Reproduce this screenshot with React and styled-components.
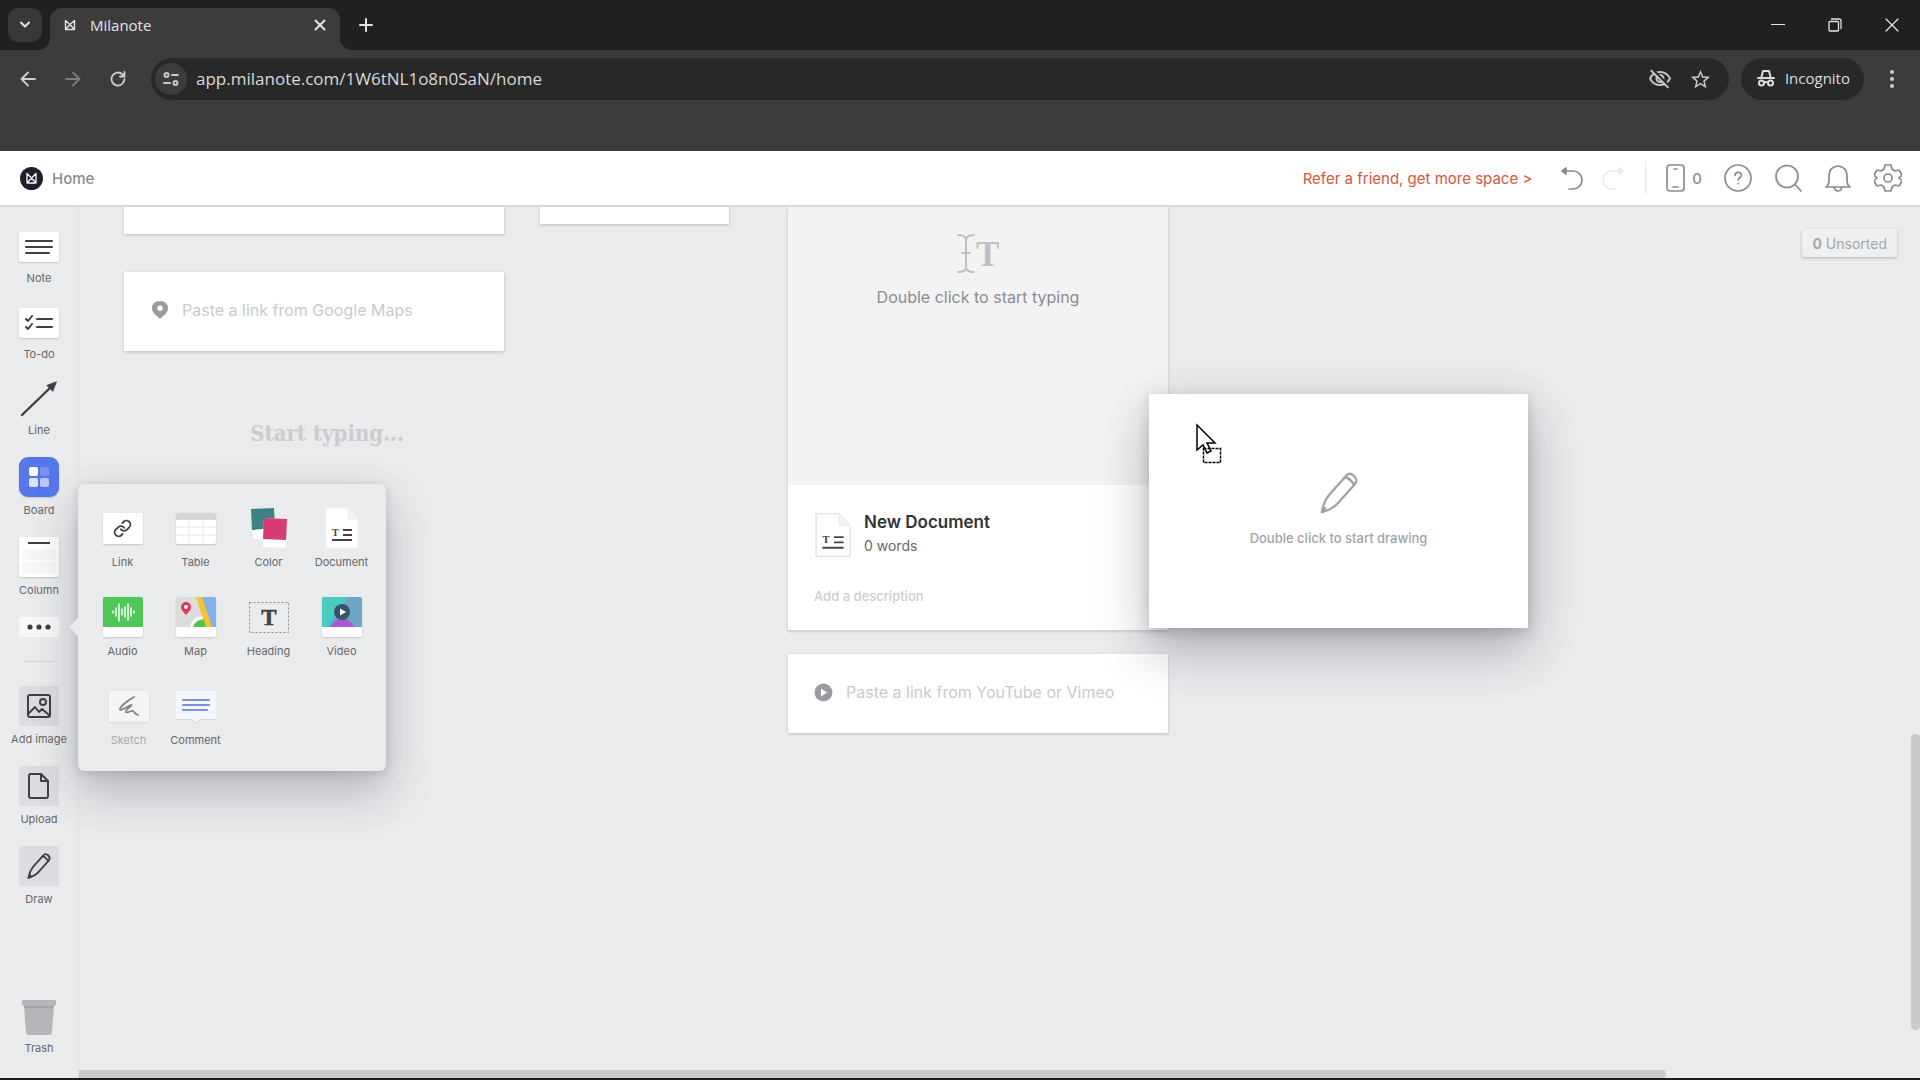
import React from 'react';
import styled, { createGlobalStyle } from 'styled-components';
import { Link2Icon, LinkIcon as ChainIcon } from 'lucide-react';
import { MdOutlineVisibilityOff, MdStarBorder } from 'react-icons/md';

const GlobalStyle = createGlobalStyle`
  * {
    box-sizing: border-box;
  }
  body {
    margin: 0;
    background: #1c1c1c;
    font-family: Inter, sans-serif;
  }
  button {
    border: 0;
    padding: 0;
    background: none;
    font: inherit;
    color: inherit;
    cursor: pointer;
  }
  input {
    border: 0;
    padding: 0;
    background: none;
    outline: 0;
    font: inherit;
    min-width: 0;
  }
  svg {
    display: block;
    flex: none;
  }
`;

const Page = styled.div`
  display: flex;
  flex-direction: column;
  min-height: 100vh;
  padding-bottom: 2px;
`;

/* browser chrome */

const TabStrip = styled.div`
  display: flex;
  align-items: flex-end;
  height: 50px;
  padding-left: 8px;
  background: #202020;
  color: #e3e3e3;
`;

const TabSearch = styled.button`
  display: grid;
  place-items: center;
  width: 34px;
  height: 34px;
  margin: 0 8px 8px 0;
  border-radius: 10px;
  background: #383838;
`;

const Tab = styled.div`
  position: relative;
  display: flex;
  align-items: center;
  width: 290px;
  height: 42px;
  padding: 0 14px 8px;
  border-radius: 12px 12px 0 0;
  background: #3c3c3c;
  font: 15px/20px 'Open Sans', sans-serif;

  &::before,
  &::after {
    content: '';
    position: absolute;
    bottom: 0;
    width: 12px;
    height: 12px;
  }
  &::before {
    right: 100%;
    background: radial-gradient(circle at 0 0, #202020 12px, #3c3c3c 12px);
  }
  &::after {
    left: 100%;
    background: radial-gradient(circle at 100% 0, #202020 12px, #3c3c3c 12px);
  }
`;

const TabTitle = styled.span`
  flex: 1;
  margin-left: 14px;
`;

const NewTab = styled.button`
  margin: 0 auto 18px 19px;
`;

const WindowButton = styled.button`
  display: grid;
  place-items: center;
  width: 57px;
  height: 50px;
`;

const Toolbar = styled.div`
  display: flex;
  align-items: flex-start;
  height: 101px;
  padding: 8px 16px 0 0;
  background: #3c3c3c;
  color: #dcdcdc;
`;

const NavButton = styled.button`
  display: grid;
  place-items: center;
  width: 45px;
  height: 42px;
  color: ${(p) => (p.$dim ? '#7d7d7d' : '#d0d0d0')};
`;

const NavGroup = styled.div`
  display: flex;
  margin: 0 11px 0 5px;
`;

const Omnibox = styled.div`
  display: flex;
  align-items: center;
  flex: 1;
  height: 42px;
  padding: 0 17px 0 4px;
  border-radius: 21px;
  background: #282828;
  color: #c8c8c8;
  gap: 17px;
`;

const SiteInfo = styled.button`
  display: grid;
  place-items: center;
  width: 32px;
  height: 32px;
  border-radius: 16px;
  background: #3c3c3c;
  margin-right: -8px;
`;

const Address = styled.input`
  flex: 1;
  color: #d9d9d9;
  font: 17px/24px 'Open Sans', sans-serif;
`;

const Incognito = styled.button`
  display: flex;
  align-items: center;
  gap: 10px;
  height: 42px;
  margin: 0 16px 0 12px;
  padding: 0 14px 2px 16px;
  border-radius: 21px;
  background: #282828;
  font: 15px/20px 'Open Sans', sans-serif;
`;

const MenuButton = styled(NavButton)`
  width: 24px;
`;

/* app */

const Header = styled.header`
  display: flex;
  align-items: center;
  height: 56px;
  padding: 0 18px 0 20px;
  background: #fff;
  border-bottom: 2px solid #d8d9db;
  color: #8a8b8f;
`;

const HomeLink = styled.a`
  display: flex;
  align-items: center;
  gap: 9px;
  margin-right: auto;
  color: #8a8b8f;
  font-size: 15px;
  font-weight: 500;
  text-decoration: none;
`;

const Refer = styled.a`
  margin-right: 28px;
  color: #d2583c;
  font-size: 15px;
  text-decoration: none;
`;

const HeaderGroup = styled.div`
  display: flex;
  align-items: center;
  gap: ${(p) => p.$gap}px;
`;

const HeaderButton = styled.button`
  display: flex;
  align-items: center;
  gap: 6px;
  font-size: 15px;
  font-weight: 500;
`;

const Divider = styled.span`
  width: 1px;
  height: 32px;
  margin: 0 20px;
  background: #e8e8e9;
`;

const Workspace = styled.div`
  position: relative;
  display: flex;
  flex: 1;
  background: #eaebed;
`;

const Sidebar = styled.nav`
  display: flex;
  flex-direction: column;
  align-items: center;
  gap: 20px;
  width: 79px;
  padding: 22px 0 23px;
  border-right: 1px solid #dfe0e2;
`;

const Tool = styled.button`
  display: flex;
  flex-direction: column;
  align-items: center;
  gap: 6px;
  width: 73px;
  padding-left: ${(p) => (p.$faded ? 12 : 0)}px;
  color: #66676b;
  font-size: 11px;
  line-height: 14px;
  opacity: ${(p) => (p.$faded ? 0.5 : 1)};
`;

const IconSlot = styled.span`
  display: grid;
  place-items: center;
  height: ${(p) => p.$h}px;
`;

const Tile = styled.span`
  display: grid;
  place-items: center;
  width: 40px;
  height: ${(p) => p.$h}px;
  border-radius: ${(p) => p.$r || 2}px;
  background: ${(p) => p.$bg || '#fff'};
  box-shadow: ${(p) => (p.$flat ? 'none' : '0 1px 2px rgba(0, 0, 0, 0.16)')};
  overflow: hidden;
`;

const SideRule = styled.hr`
  width: 32px;
  height: 1px;
  margin: 4px 0;
  border: 0;
  background: #d2d3d6;
`;

const Trash = styled(Tool)`
  margin-top: auto;
`;

const Flyout = styled.div`
  position: absolute;
  top: 277px;
  left: 78px;
  z-index: 2;
  display: grid;
  grid-template-columns: repeat(4, 73px);
  gap: 27px 0;
  padding: 23px 8px 24px;
  border-radius: 6px;
  background: #eaebed;
  box-shadow: 0 20px 48px rgba(20, 20, 30, 0.26), 0 2px 10px rgba(20, 20, 30, 0.14);

  &::before {
    content: '';
    position: absolute;
    top: 134px;
    left: -9px;
    border: 9px solid transparent;
    border-left: 0;
    border-right-color: #eaebed;
  }
`;

const Canvas = styled.main`
  position: relative;
  flex: 1;
  overflow: hidden;
`;

const Card = styled.div`
  position: absolute;
  left: ${(p) => p.$x}px;
  top: ${(p) => p.$y}px;
  width: ${(p) => p.$w}px;
  height: ${(p) => p.$h}px;
  background: #fff;
  box-shadow: 0 1px 3px rgba(0, 0, 0, 0.2);
`;

const LinkCard = styled(Card)`
  display: flex;
  align-items: center;
  gap: ${(p) => p.$gap}px;
  padding: 0 26px 3px;
  color: #9b9c9f;
`;

const LinkInput = styled.input`
  flex: 1;
  font-size: 16px;
  line-height: 20px;
  &::placeholder {
    color: #c9cacc;
    opacity: 1;
  }
`;

const HeadingInput = styled.input`
  position: absolute;
  left: 58px;
  top: 210px;
  width: 380px;
  text-align: center;
  font: bold 22px/32px 'DejaVu Serif Condensed', 'DejaVu Serif', serif;
  &::placeholder {
    color: #cbccce;
    opacity: 1;
  }
`;

const DocPreview = styled.div`
  display: flex;
  flex-direction: column;
  align-items: center;
  gap: 14px;
  height: 278px;
  padding-top: 26px;
  background: #f3f3f4;
  color: #8b8c90;
  font-size: 16px;
  line-height: 20px;
`;

const DocInfo = styled.div`
  display: flex;
  gap: 13px;
  padding: 26px 26px 0 27px;
`;

const DocName = styled.div`
  color: #323338;
  font-size: 17px;
  font-weight: 600;
  line-height: 22px;
`;

const DocWords = styled.div`
  margin-top: 2px;
  color: #66676b;
  font-size: 14px;
  line-height: 22px;
`;

const Description = styled.input`
  margin: 27px 26px 0;
  width: 300px;
  font-size: 13px;
  font-weight: 500;
  line-height: 20px;
  &::placeholder {
    color: #cdced0;
    opacity: 1;
  }
`;

const SketchCard = styled(Card)`
  display: flex;
  flex-direction: column;
  align-items: center;
  gap: 14px;
  padding-top: 78px;
  color: #a3a4a6;
  font-size: 13px;
  font-weight: 500;
  line-height: 20px;
  box-shadow: 0 20px 48px rgba(20, 20, 30, 0.3), 0 4px 12px rgba(20, 20, 30, 0.16);
`;

const Cursor = styled.div`
  position: absolute;
  left: 1117px;
  top: 216px;
`;

const Unsorted = styled.button`
  position: absolute;
  top: 22px;
  right: 23px;
  height: 28px;
  padding: 0 10px;
  border-radius: 3px;
  background: #eeeff0;
  box-shadow: 0 1px 3px rgba(0, 0, 0, 0.24);
  color: #a5a6a9;
  font-size: 14px;
`;

const ScrollV = styled.div`
  position: absolute;
  right: 0;
  top: 60.5%;
  width: 9px;
  height: 34%;
  border-radius: 5px;
  background: #c9cacc;
`;

const ScrollH = styled.div`
  position: absolute;
  left: 0;
  bottom: 0;
  width: 86.2%;
  height: 8px;
  border-radius: 0 4px 4px 0;
  background: #c9cacc;
`;

/* icons */

const Svg = ({ w, h, vw, vh, sw = 2, color = 'currentColor', children }) => (
  <svg
    width={w}
    height={h || w}
    viewBox={`0 0 ${vw || w} ${vh || vw || h || w}`}
    fill="none"
    stroke={color}
    strokeWidth={sw}
    strokeLinecap="round"
    strokeLinejoin="round"
    aria-hidden="true"
  >
    {children}
  </svg>
);

const Mark = ({ size }) => (
  <Svg w={size} vw={12} sw={1.4}>
    <path d="M1.500 1.500L6 5.500l4.500-4v9h-9ZM1.500 10.500L6 5.500l4.500 5" />
  </Svg>
);

const Logo = () => (
  <svg width="23" height="23" viewBox="0 0 23 23" aria-hidden="true">
    <circle cx="11.5" cy="11.5" r="11.5" fill="#1d1f2b" />
    <path
      d="M7 6.500l4.500 4.500L16 6.500V16H7ZM7 16l4.500-5 4.500 5"
      fill="none"
      stroke="#fff"
      strokeWidth="1.3"
      strokeLinejoin="round"
    />
  </svg>
);

const Pencil = ({ w, h, sw, color }) => (
  <Svg w={w} h={h} vw={38} vh={42} sw={sw} color={color}>
    <path d="M2 40C3 33 5 28 9 23L26 4C28 1 31 1 34 4C37 7 37 9 35 12L18 31C14 36 9 38 2 40Z" />
    <path d="M25 5C28 6 32 9 34 13M2 40l3-4" />
  </Svg>
);

const DocPage = ({ w, h, outline }) => (
  <svg width={w} height={h} viewBox="0 0 34 42" aria-hidden="true">
    <path
      d="M1 1h22l10 11v29H1Z"
      fill="#fff"
      stroke={outline ? '#e6e6e7' : '#f3f3f4'}
      strokeWidth="1.5"
    />
    <path d="M23 1v11h10" fill="#f3f3f4" stroke="#ececed" />
    <text x="7" y="29" fontFamily="Liberation Serif" fontWeight="bold" fontSize="10" fill="#444549">
      T
    </text>
    <path d="M18 23h9M18 28h9M7 33h20" stroke="#444549" strokeWidth="1.8" />
  </svg>
);

const NoteIcon = () => (
  <Tile $h={30}>
    <Svg w={28} h={16} color="#3f4045">
      <path d="M1 2h26M1 8h26M1 14h23" />
    </Svg>
  </Tile>
);

const TodoIcon = () => (
  <Tile $h={30}>
    <Svg w={28} h={16} color="#3f4045">
      <path d="M12 4h15M12 12h15M1 4l2 2 4-5M1 12l2 2 4-5" />
    </Svg>
  </Tile>
);

const LineIcon = () => (
  <Svg w={38} h={36} sw={2.4} color="#3f4045">
    <path d="M2 34L32 5" />
    <path d="M36 1L27 4.500l5.500 5.500Z" fill="#3f4045" strokeWidth="1" />
  </Svg>
);

const BoardIcon = () => (
  <Tile $h={40} $r={9} $bg="#5577ea">
    <svg width="20" height="20" aria-hidden="true">
      <rect width="9" height="9" rx="2" fill="#fff" />
      <rect x="11" width="9" height="9" rx="2" fill="#fff" opacity="0.22" />
      <rect y="11" width="9" height="9" rx="2" fill="#fff" opacity="0.8" />
      <rect x="11" y="11" width="9" height="9" rx="2" fill="#fff" opacity="0.6" />
    </svg>
  </Tile>
);

const ColumnIcon = () => (
  <Tile $h={40}>
    <svg width="40" height="40" aria-hidden="true">
      <path d="M9 6h22" stroke="#3f4045" strokeWidth="2" />
      <path d="M3 12h34v11H3zM3 25h34v11H3z" fill="#f7f7f8" />
    </svg>
  </Tile>
);

const DotsIcon = () => (
  <Tile $h={20} $r={4} $bg="#f8f8f9" $flat>
    <svg width="24" height="6" fill="#3f4045" aria-hidden="true">
      <circle cx="3" cy="3" r="2.6" />
      <circle cx="12" cy="3" r="2.6" />
      <circle cx="21" cy="3" r="2.6" />
    </svg>
  </Tile>
);

const ImageIcon = () => (
  <Tile $h={40} $bg="#dcdde0" $flat>
    <Svg w={24} color="#3f4045">
      <rect x="1" y="1" width="22" height="22" rx="2" />
      <circle cx="16" cy="8" r="3" />
      <path d="M2 19l6-6 4 5 3-3 7 6" />
    </Svg>
  </Tile>
);

const UploadIcon = () => (
  <Tile $h={40} $bg="#dcdde0" $flat>
    <Svg w={22} h={26} color="#3f4045">
      <path d="M3 1h10l7 7v15c0 1-1 2-2 2H3c-1 0-2-1-2-2V3c0-1 1-2 2-2Z" />
      <path d="M13 1v7h7" />
    </Svg>
  </Tile>
);

const DrawIcon = () => (
  <Tile $h={40} $bg="#dcdde0" $flat>
    <Pencil w={26} h={26} sw={3} color="#3f4045" />
  </Tile>
);

const TrashIcon = () => (
  <svg width="34" height="35" aria-hidden="true">
    <path d="M0 0h34v5l-2 1-2 26q0 3-3 3H7q-3 0-3-3L2 6 0 5Z" fill="#b5b6b9" />
    <path d="M2 6h30v2H2z" fill="#a6a7aa" />
  </svg>
);

const LinkIcon = () => (
  <Tile $h={31}>
    <ChainIcon size={19} strokeWidth={2.3} color="#3f4045" />
  </Tile>
);

const TableIcon = () => (
  <Tile $h={31}>
    <svg width="40" height="31" aria-hidden="true">
      <path d="M0 0h40v7H0z" fill="#d4d5d7" />
      <path d="M0 14h40M0 22h40M13 7v24M27 7v24" stroke="#e3e4e6" />
    </svg>
  </Tile>
);

const ColorIcon = () => (
  <svg width="38" height="42" aria-hidden="true">
    <path d="M1 2l23-1 1 29-22 2Z" fill="#fff" />
    <path d="M1 2l23-1 1 20-23 2Z" fill="#3d8186" />
    <path d="M14 11l23 1-2 29-22-1Z" fill="#fff" />
    <path d="M14 11l23 1-1 21-23-1Z" fill="#d73d74" />
  </svg>
);

const AudioIcon = () => (
  <Tile $h={40}>
    <svg width="40" height="40" aria-hidden="true">
      <path d="M0 0h40v30H0z" fill="#4fc656" />
      <path
        d="M10 14v2M13 11v8M16 7v17M19 12v6M22 10v10M25 7v16M28 11v8M31 14v2"
        stroke="#fff"
        strokeWidth="1.5"
        strokeLinecap="round"
      />
    </svg>
  </Tile>
);

const MapIcon = () => (
  <Tile $h={40}>
    <svg width="40" height="40" aria-hidden="true">
      <path d="M0 0h40v30H0z" fill="#dcdcdc" />
      <path d="M21 0h19v30h-6Z" fill="#82b1ec" />
      <path d="M14 30q2-10 12-11l4 11Z" fill="#fff" />
      <path d="M17 30q2-7 11-8l3 8Z" fill="#57c152" />
      <path d="M20 0h6l10 30h-6Z" fill="#f2c52c" />
      <path d="M10 18c-3-4-5-5-5-8a5 5 0 0 1 10 0c0 3-2 4-5 8Z" fill="#d93a5d" />
      <circle cx="10" cy="10" r="2" fill="#fff" />
    </svg>
  </Tile>
);

const HeadingIcon = () => (
  <svg width="40" height="31" aria-hidden="true">
    <rect x="0.5" y="0.5" width="39" height="30" fill="none" stroke="#87888b" strokeDasharray="2 2" />
    <text
      x="20"
      y="23"
      textAnchor="middle"
      fontFamily="Liberation Serif"
      fontWeight="bold"
      fontSize="23"
      fill="#3f4045"
      stroke="#3f4045"
      strokeWidth="0.500"
    >
      T
    </text>
  </svg>
);

const VideoIcon = () => (
  <Tile $h={40}>
    <svg width="40" height="40" aria-hidden="true">
      <path d="M0 0h40v30H0z" fill="#6fa5c4" />
      <path d="M0 0h26L6 30H0z" fill="#48cbc0" />
      <path d="M8 30q6-9 12-9t13 9Z" fill="#a35cd3" />
      <circle cx="20" cy="15" r="8" fill="#35546f" />
      <path d="M18 11.500l6 3.500-6 3.500z" fill="#fff" />
    </svg>
  </Tile>
);

const SketchIcon = () => (
  <Tile $h={31}>
    <Svg w={22} h={20} sw={1.8} color="#1f2024">
      <path d="M16 1C10 4 3 10 2 13s7-2 11-4c3-1-6 5-5 7s5-2 7-1 1 3 5 4" />
    </Svg>
  </Tile>
);

const CommentIcon = () => (
  <svg width="40" height="35" aria-hidden="true">
    <path d="M0 2h40v28H24l-4 4-4-4H0Z" fill="#f5f7fe" />
    <path d="M0 30.500h16l4 4 4-4h16" fill="none" stroke="#d5d7dd" />
    <path d="M7 11h26M7 16h26M7 21h24" stroke="#7c8fe0" strokeWidth="2" strokeLinecap="round" />
  </svg>
);

const sideTools = [
  { label: 'Note', h: 36, icon: <NoteIcon /> },
  { label: 'To-do', h: 36, icon: <TodoIcon /> },
  { label: 'Line', h: 36, icon: <LineIcon /> },
  { label: 'Board', h: 40, icon: <BoardIcon /> },
  { label: 'Column', h: 40, icon: <ColumnIcon /> },
];

const mediaTools = [
  { label: 'Add image', icon: <ImageIcon /> },
  { label: 'Upload', icon: <UploadIcon /> },
  { label: 'Draw', icon: <DrawIcon /> },
];

const moreTools = [
  { label: 'Link', icon: <LinkIcon /> },
  { label: 'Table', icon: <TableIcon /> },
  { label: 'Color', icon: <ColorIcon /> },
  { label: 'Document', icon: <DocPage w={34} h={42} /> },
  { label: 'Audio', icon: <AudioIcon /> },
  { label: 'Map', icon: <MapIcon /> },
  { label: 'Heading', icon: <HeadingIcon /> },
  { label: 'Video', icon: <VideoIcon /> },
  { label: 'Sketch', icon: <SketchIcon />, faded: true },
  { label: 'Comment', icon: <CommentIcon /> },
];

const BrowserChrome = () => (
  <>
    <TabStrip>
      <TabSearch aria-label="Search tabs">
        <Svg w={12} h={8}>
          <path d="M2 1.500l4 4 4-4" />
        </Svg>
      </TabSearch>
      <Tab>
        <Mark size={12} />
        <TabTitle>Milanote</TabTitle>
        <button aria-label="Close tab">
          <Svg w={12}>
            <path d="M1.500 1.500l9 9M10.500 1.500l-9 9" />
          </Svg>
        </button>
      </Tab>
      <NewTab aria-label="New tab">
        <Svg w={14}>
          <path d="M7 1v12M1 7h12" />
        </Svg>
      </NewTab>
      <WindowButton aria-label="Minimize">
        <Svg w={14} sw={1}>
          <path d="M0 6.500h14" />
        </Svg>
      </WindowButton>
      <WindowButton aria-label="Restore">
        <Svg w={14} sw={1.3}>
          <rect x="1" y="3.500" width="9.500" height="9.500" rx="1" />
          <path d="M3.500 1H11q2 0 2 2v7.500" />
        </Svg>
      </WindowButton>
      <WindowButton aria-label="Close">
        <Svg w={14} sw={1.3}>
          <path d="M1 1l12 12M13 1L1 13" />
        </Svg>
      </WindowButton>
    </TabStrip>
    <Toolbar>
      <NavGroup>
        <NavButton aria-label="Back">
          <Svg w={16} sw={1.8}>
            <path d="M15 8H1.500M8 1.500L1.500 8 8 14.500" />
          </Svg>
        </NavButton>
        <NavButton aria-label="Forward" $dim>
          <Svg w={16} sw={1.8}>
            <path d="M1 8h13.500M8 1.500L14.500 8 8 14.500" />
          </Svg>
        </NavButton>
        <NavButton aria-label="Reload">
          <Svg w={16} sw={1.8}>
            <path d="M14.500 8A6.500 6.500 0 1 1 12.500 3.300L14.500 5M14.500 1v4.500H10" />
          </Svg>
        </NavButton>
      </NavGroup>
      <Omnibox>
        <SiteInfo aria-label="Site information">
          <Svg w={16}>
            <circle cx="3.500" cy="4" r="2" />
            <path d="M9 4h6M1 12h6" />
            <circle cx="12.500" cy="12" r="2" />
          </Svg>
        </SiteInfo>
        <Address aria-label="Address" defaultValue="app.milanote.com/1W6tNL1o8n0SaN/home" />
        <button aria-label="Third-party cookies blocked">
          <MdOutlineVisibilityOff size={24} />
        </button>
        <button aria-label="Bookmark this tab">
          <MdStarBorder size={23} />
        </button>
      </Omnibox>
      <Incognito>
        <Svg w={18}>
          <path d="M1 9h16M4.500 8L6 2h6l1.500 6" />
          <circle cx="4.500" cy="14" r="2.500" />
          <circle cx="13.500" cy="14" r="2.500" />
          <path d="M7 13.500q2-1 4 0" />
        </Svg>
        Incognito
      </Incognito>
      <MenuButton aria-label="Browser menu">
        <svg width="4" height="18" fill="currentColor" aria-hidden="true">
          <circle cx="2" cy="2" r="2" />
          <circle cx="2" cy="9" r="2" />
          <circle cx="2" cy="16" r="2" />
        </svg>
      </MenuButton>
    </Toolbar>
  </>
);

const AppHeader = () => (
  <Header>
    <HomeLink href="#home">
      <Logo />
      Home
    </HomeLink>
    <Refer href="#refer">Refer a friend, get more space &gt;</Refer>
    <HeaderGroup $gap={17}>
      <HeaderButton aria-label="Undo">
        <Svg w={24} h={25} sw={1.7}>
          <path d="M3 5h10a9 9 0 0 1 0 18H9" />
          <path d="M6 2L2 5l4 3Z" fill="currentColor" />
        </Svg>
      </HeaderButton>
      <HeaderButton aria-label="Redo" disabled>
        <Svg w={24} h={25} sw={1.7} color="#e9e9ea">
          <path d="M21 5H11a9 9 0 0 0 0 18h3" />
          <path d="M18 2l4 3-4 3Z" fill="#e9e9ea" />
        </Svg>
      </HeaderButton>
    </HeaderGroup>
    <Divider />
    <HeaderGroup $gap={22}>
      <HeaderButton aria-label="Mobile">
        <Svg w={20} h={28} sw={1.7}>
          <rect x="1" y="1" width="17" height="26" rx="3" />
          <path d="M8 5h3M7 23h5" />
        </Svg>
        0
      </HeaderButton>
      <HeaderButton aria-label="Help">
        <Svg w={28} sw={1.7}>
          <circle cx="14" cy="14" r="13" />
          <path d="M11 11.500c0-4 6.500-4 6.500-.5 0 2.500-3.300 2.500-3.300 5M14.200 19.500v.1" />
        </Svg>
      </HeaderButton>
      <HeaderButton aria-label="Search">
        <Svg w={28} sw={1.7}>
          <circle cx="13" cy="12.500" r="11" />
          <path d="M21 20.500l6 6.500" />
        </Svg>
      </HeaderButton>
      <HeaderButton aria-label="Notifications">
        <Svg w={28} sw={1.7}>
          <path d="M2 23q3-2 3-7v-4q0-9 9-10 9 1 9 10v4q0 5 3 7ZM10 23q1 4 4 4t4-4" />
        </Svg>
      </HeaderButton>
      <HeaderButton aria-label="Settings">
        <Svg w={28} sw={1.7}>
          <path d="M11 1h6l1 4 3 2 4-1 3 5-3 3 3 3-3 5-4-1-3 2-1 4h-6l-1-4-3-2-4 1-3-5 3-3-3-3 3-5 4 1 3-2Z" />
          <circle cx="14" cy="14" r="4" />
        </Svg>
      </HeaderButton>
    </HeaderGroup>
  </Header>
);

const App = () => {
  return (
    <>
      <GlobalStyle />
      <Page>
        <BrowserChrome />
        <AppHeader />
        <Workspace>
          <Sidebar>
            {sideTools.map((t) => (
              <Tool key={t.label}>
                <IconSlot $h={t.h}>{t.icon}</IconSlot>
                {t.label}
              </Tool>
            ))}
            <Tool aria-label="More tools">
              <DotsIcon />
            </Tool>
            <SideRule />
            {mediaTools.map((t) => (
              <Tool key={t.label}>
                <IconSlot $h={40}>{t.icon}</IconSlot>
                {t.label}
              </Tool>
            ))}
            <Trash>
              <TrashIcon />
              Trash
            </Trash>
          </Sidebar>

          <Flyout>
            {moreTools.map((t) => (
              <Tool key={t.label} $faded={t.faded}>
                <IconSlot $h={42}>{t.icon}</IconSlot>
                {t.label}
              </Tool>
            ))}
          </Flyout>

          <Canvas>
            <Card $x={45} $y={-60} $w={380} $h={87} />
            <Card $x={461} $y={-60} $w={189} $h={77} />

            <LinkCard $x={45} $y={65} $w={380} $h={79} $gap={14}>
              <svg width="18" height="20" fill="currentColor" aria-hidden="true">
                <path
                  d="M10 1c-5 0-8 3-8 7 0 5 4 7 8 11 4-4 8-6 8-11 0-4-3-7-8-7Zm0 4.500a2.700 2.700 0 1 1 0 5.400 2.700 2.700 0 0 1 0-5.400Z"
                  fillRule="evenodd"
                />
              </svg>
              <LinkInput
                aria-label="Google Maps link"
                placeholder="Paste a link from Google Maps"
              />
            </LinkCard>

            <HeadingInput aria-label="Heading" placeholder="Start typing..." />

            <Card $x={709} $y={0} $w={380} $h={423}>
              <DocPreview>
                <Svg w={42} h={40} color="#bfc0c2">
                  <path d="M1 2q8 0 8 5v27q0 5-8 5M17 2q-8 0-8 5v27q0 5 8 5M5 20h8" />
                  <text
                    x="19"
                    y="33"
                    fontFamily="Liberation Serif"
                    fontWeight="bold"
                    fontSize="35"
                    fill="#bfc0c2"
                    stroke="none"
                  >
                    T
                  </text>
                </Svg>
                Double click to start typing
              </DocPreview>
              <DocInfo>
                <DocPage w={36} h={48} outline />
                <div>
                  <DocName>New Document</DocName>
                  <DocWords>0 words</DocWords>
                </div>
              </DocInfo>
              <Description aria-label="Description" placeholder="Add a description" />
            </Card>

            <LinkCard $x={709} $y={447} $w={380} $h={79} $gap={13}>
              <svg width="19" height="19" aria-hidden="true">
                <circle cx="9.500" cy="9.500" r="9" fill="currentColor" />
                <path d="M7 5.500l6 4-6 4z" fill="#fff" />
              </svg>
              <LinkInput
                aria-label="Video link"
                placeholder="Paste a link from YouTube or Vimeo"
              />
            </LinkCard>

            <SketchCard $x={1070} $y={187} $w={379} $h={234}>
              <Pencil w={38} h={42} sw={2.4} />
              Double click to start drawing
            </SketchCard>

            <Cursor>
              <svg width="28" height="42" aria-hidden="true">
                <path
                  d="M1 2v25l6-5 4 8 4-2-4-8h8Z"
                  fill="#fff"
                  stroke="#000"
                  strokeWidth="1.500"
                />
                <rect
                  x="7.500"
                  y="25.500"
                  width="17"
                  height="14"
                  fill="none"
                  stroke="#000"
                  strokeWidth="1.500"
                  strokeDasharray="3 1"
                />
              </svg>
            </Cursor>

            <Unsorted>
              <b>0</b> Unsorted
            </Unsorted>
            <ScrollV />
            <ScrollH />
          </Canvas>
        </Workspace>
      </Page>
    </>
  );
};

export default App;
